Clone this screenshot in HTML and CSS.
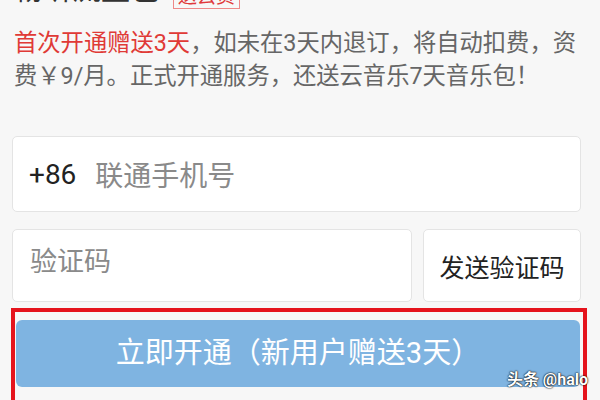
FILE: index.html
```html
<!DOCTYPE html>
<html lang="zh-CN">
<head>
    <meta charset="UTF-8">
    <meta name="viewport" content="width=device-width, initial-scale=1.0">
    <title>畅听流量包</title>
    <link rel="stylesheet" href="styles.css">
</head>
<body>
    <div class="page">
        <div class="title">
            <span class="name">畅听流量包</span>
            <span class="tag">送云资</span>
        </div>
        <p class="desc">
            <span class="red">首次开通赠送3天</span>，如未在3天内退订，将自动扣费，资<br>费￥9/月。正式开通服务，还送云音乐7天音乐包！
        </p>

        <div class="field phone">
            <span class="code">+86</span>
            <span class="hint">联通手机号</span>
        </div>

        <div class="row">
            <div class="field verify">
                <span class="hint">验证码</span>
            </div>
            <div class="field send">发送验证码</div>
        </div>

        <div class="mark">
            <div class="btn">立即开通（新用户赠送3天）</div>
        </div>
    </div>
    <div class="watermark">头条 @halo</div>
</body>
</html>
```

FILE: styles.css
```css
body,p{
    margin:0;
    padding:0;
}
body{
    background:#f7f7f7;
    font-family: Roboto, "Noto Sans CJK SC", sans-serif;
    color:#333;
    height:400px;
    overflow:hidden;
    position:relative;
}
.page{
    padding:0 12px;
}

.title{
    margin-top:-27px;
    display:flex;
    align-items:flex-end;
    gap:14px;
    padding-left:2px;
    height:34px;
}
.title .name{
    font-size:29px;
    line-height:34px;
    color:#333;
}
.title .tag{
    font-size:19px;
    line-height:22px;
    color:#e0393b;
    border:1px solid #e88;
    padding:0 4px;
    margin-bottom:-2px;
}

.desc{
    margin-top:20px;
    font-size:23.3px;
    line-height:33px;
    color:#666;
    padding-left:2px;
    white-space:nowrap;
}
.red{
    color:#e03a36;
}

.field{
    background:#fff;
    border:1px solid #e4e4e4;
    border-radius:5px;
    box-sizing:border-box;
    display:flex;
    align-items:center;
}
.phone{
    margin-top:43px;
    height:76px;
    width:569px;
    padding-left:16px;
    font-size:28px;
}
.phone .code{
    color:#222;
    margin-right:19px;
}
.hint{
    color:#8a8a8a;
}

.row{
    display:flex;
    gap:11px;
    margin-top:17px;
    width:569px;
}
.verify{
    width:400px;
    height:73px;
    padding:0 0 12px 17px;
    font-size:27px;
}
.send{
    flex:1;
    height:73px;
    justify-content:center;
    font-size:25px;
    color:#222;
}

.mark{
    margin-top:6px;
    margin-left:-1px;
    width:576px;
    height:120px;
    box-sizing:border-box;
    border:4px solid #e5141d;
    padding:8px 3px 0 1px;
}
.btn{
    height:67px;
    background:#7fb4e1;
    border-radius:6px;
    color:#fff;
    font-size:29px;
    display:flex;
    align-items:center;
    justify-content:center;
    padding-bottom:7px;
    box-sizing:border-box;
}

.watermark{
    position:absolute;
    right:12px;
    bottom:10px;
    font-size:16px;
    font-weight:bold;
    color:#fff;
    text-shadow:0 0 2px #000, 0 0 1px #000;
}
```
